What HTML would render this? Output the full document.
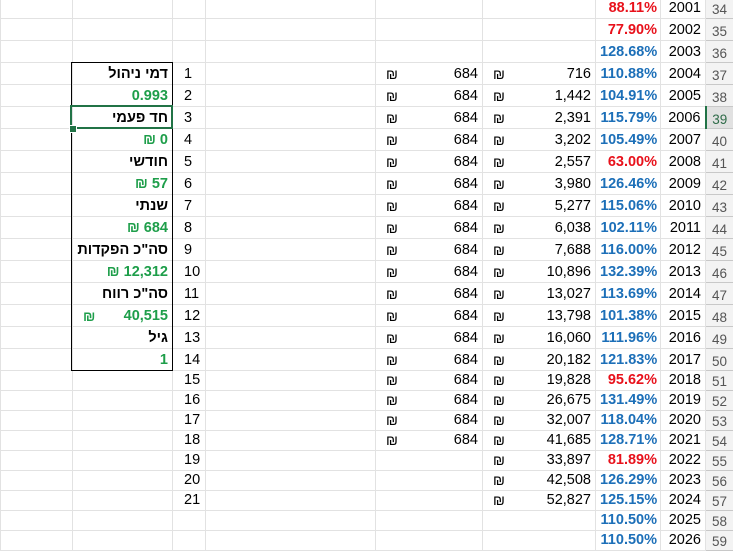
<!DOCTYPE html>
<html><head><meta charset="utf-8"><style>
body{margin:0;width:733px;height:545px;overflow:hidden;background:#fff;position:relative;font-family:"Liberation Sans",Arial,"Noto Sans CJK JP",sans-serif;font-size:14.5px;color:#000}
table{position:absolute;left:0;top:-4.5px;border-collapse:collapse;table-layout:fixed;width:733px}
td{border:1px solid #e2e2e2;padding:0 4px 1px 4px;vertical-align:bottom;white-space:nowrap;overflow:hidden;text-align:right;line-height:17px}
tr{height:22px}
tr.s{height:20px}
td.h{background:#f3f3f3;border-color:#c8c8c8;color:#555;font-size:13.5px;text-align:center;padding:0}
td.hs{background:#e1e1e1;color:#2e6b48;border-left:2px solid #217346}
td.n{text-align:left;padding-left:11px}
td.p{padding-right:3px}
.c{float:left;padding-left:6px;font-size:14px}
.r{color:#e8111b;font-weight:bold}
.b{color:#1c6fb8;font-weight:bold}
.g{color:#1e9e4a;font-weight:bold}
.k{font-weight:bold}
#box{position:absolute;left:71px;top:61.5px;width:100px;height:307px;border:1px solid #000}
#sel{position:absolute;left:70px;top:105px;width:99px;height:20px;border:2px solid #217346}
#hd{position:absolute;left:69px;top:125px;width:6px;height:6px;background:#217346;border:1px solid #fff}
</style></head><body>
<table>
<colgroup><col style="width:72px"><col style="width:100px"><col style="width:33px"><col style="width:170px"><col style="width:107px"><col style="width:113px"><col style="width:65px"><col style="width:45px"><col style="width:28px"></colgroup>
<tr><td></td><td></td><td></td><td></td><td></td><td></td><td class="r p">88.11%</td><td>2001</td><td class="h">34</td></tr>
<tr><td></td><td></td><td></td><td></td><td></td><td></td><td class="r p">77.90%</td><td>2002</td><td class="h">35</td></tr>
<tr><td></td><td></td><td></td><td></td><td></td><td></td><td class="b p">128.68%</td><td>2003</td><td class="h">36</td></tr>
<tr><td></td><td class="k">דמי ניהול</td><td class="n">1</td><td></td><td><span class="c">₪</span>684</td><td><span class="c">₪</span>716</td><td class="b p">110.88%</td><td>2004</td><td class="h">37</td></tr>
<tr><td></td><td class="g">0.993</td><td class="n">2</td><td></td><td><span class="c">₪</span>684</td><td><span class="c">₪</span>1,442</td><td class="b p">104.91%</td><td>2005</td><td class="h">38</td></tr>
<tr><td></td><td class="k">חד פעמי</td><td class="n">3</td><td></td><td><span class="c">₪</span>684</td><td><span class="c">₪</span>2,391</td><td class="b p">115.79%</td><td>2006</td><td class="h hs">39</td></tr>
<tr><td></td><td class="g">₪ 0</td><td class="n">4</td><td></td><td><span class="c">₪</span>684</td><td><span class="c">₪</span>3,202</td><td class="b p">105.49%</td><td>2007</td><td class="h">40</td></tr>
<tr><td></td><td class="k">חודשי</td><td class="n">5</td><td></td><td><span class="c">₪</span>684</td><td><span class="c">₪</span>2,557</td><td class="r p">63.00%</td><td>2008</td><td class="h">41</td></tr>
<tr><td></td><td class="g">₪ 57</td><td class="n">6</td><td></td><td><span class="c">₪</span>684</td><td><span class="c">₪</span>3,980</td><td class="b p">126.46%</td><td>2009</td><td class="h">42</td></tr>
<tr><td></td><td class="k">שנתי</td><td class="n">7</td><td></td><td><span class="c">₪</span>684</td><td><span class="c">₪</span>5,277</td><td class="b p">115.06%</td><td>2010</td><td class="h">43</td></tr>
<tr><td></td><td class="g">₪ 684</td><td class="n">8</td><td></td><td><span class="c">₪</span>684</td><td><span class="c">₪</span>6,038</td><td class="b p">102.11%</td><td>2011</td><td class="h">44</td></tr>
<tr><td></td><td class="k">סה"כ הפקדות</td><td class="n">9</td><td></td><td><span class="c">₪</span>684</td><td><span class="c">₪</span>7,688</td><td class="b p">116.00%</td><td>2012</td><td class="h">45</td></tr>
<tr><td></td><td class="g">₪ 12,312</td><td class="n">10</td><td></td><td><span class="c">₪</span>684</td><td><span class="c">₪</span>10,896</td><td class="b p">132.39%</td><td>2013</td><td class="h">46</td></tr>
<tr><td></td><td class="k">סה"כ רווח</td><td class="n">11</td><td></td><td><span class="c">₪</span>684</td><td><span class="c">₪</span>13,027</td><td class="b p">113.69%</td><td>2014</td><td class="h">47</td></tr>
<tr><td></td><td class="g"><span class="c">₪</span>40,515</td><td class="n">12</td><td></td><td><span class="c">₪</span>684</td><td><span class="c">₪</span>13,798</td><td class="b p">101.38%</td><td>2015</td><td class="h">48</td></tr>
<tr><td></td><td class="k">גיל</td><td class="n">13</td><td></td><td><span class="c">₪</span>684</td><td><span class="c">₪</span>16,060</td><td class="b p">111.96%</td><td>2016</td><td class="h">49</td></tr>
<tr><td></td><td class="g">1</td><td class="n">14</td><td></td><td><span class="c">₪</span>684</td><td><span class="c">₪</span>20,182</td><td class="b p">121.83%</td><td>2017</td><td class="h">50</td></tr>
<tr class="s"><td></td><td></td><td class="n">15</td><td></td><td><span class="c">₪</span>684</td><td><span class="c">₪</span>19,828</td><td class="r p">95.62%</td><td>2018</td><td class="h">51</td></tr>
<tr class="s"><td></td><td></td><td class="n">16</td><td></td><td><span class="c">₪</span>684</td><td><span class="c">₪</span>26,675</td><td class="b p">131.49%</td><td>2019</td><td class="h">52</td></tr>
<tr class="s"><td></td><td></td><td class="n">17</td><td></td><td><span class="c">₪</span>684</td><td><span class="c">₪</span>32,007</td><td class="b p">118.04%</td><td>2020</td><td class="h">53</td></tr>
<tr class="s"><td></td><td></td><td class="n">18</td><td></td><td><span class="c">₪</span>684</td><td><span class="c">₪</span>41,685</td><td class="b p">128.71%</td><td>2021</td><td class="h">54</td></tr>
<tr class="s"><td></td><td></td><td class="n">19</td><td></td><td></td><td><span class="c">₪</span>33,897</td><td class="r p">81.89%</td><td>2022</td><td class="h">55</td></tr>
<tr class="s"><td></td><td></td><td class="n">20</td><td></td><td></td><td><span class="c">₪</span>42,508</td><td class="b p">126.29%</td><td>2023</td><td class="h">56</td></tr>
<tr class="s"><td></td><td></td><td class="n">21</td><td></td><td></td><td><span class="c">₪</span>52,827</td><td class="b p">125.15%</td><td>2024</td><td class="h">57</td></tr>
<tr class="s"><td></td><td></td><td></td><td></td><td></td><td></td><td class="b p">110.50%</td><td>2025</td><td class="h">58</td></tr>
<tr class="s"><td></td><td></td><td></td><td></td><td></td><td></td><td class="b p">110.50%</td><td>2026</td><td class="h">59</td></tr>
</table>
<div id="box"></div>
<div id="sel"></div>
<div id="hd"></div>
</body></html>
